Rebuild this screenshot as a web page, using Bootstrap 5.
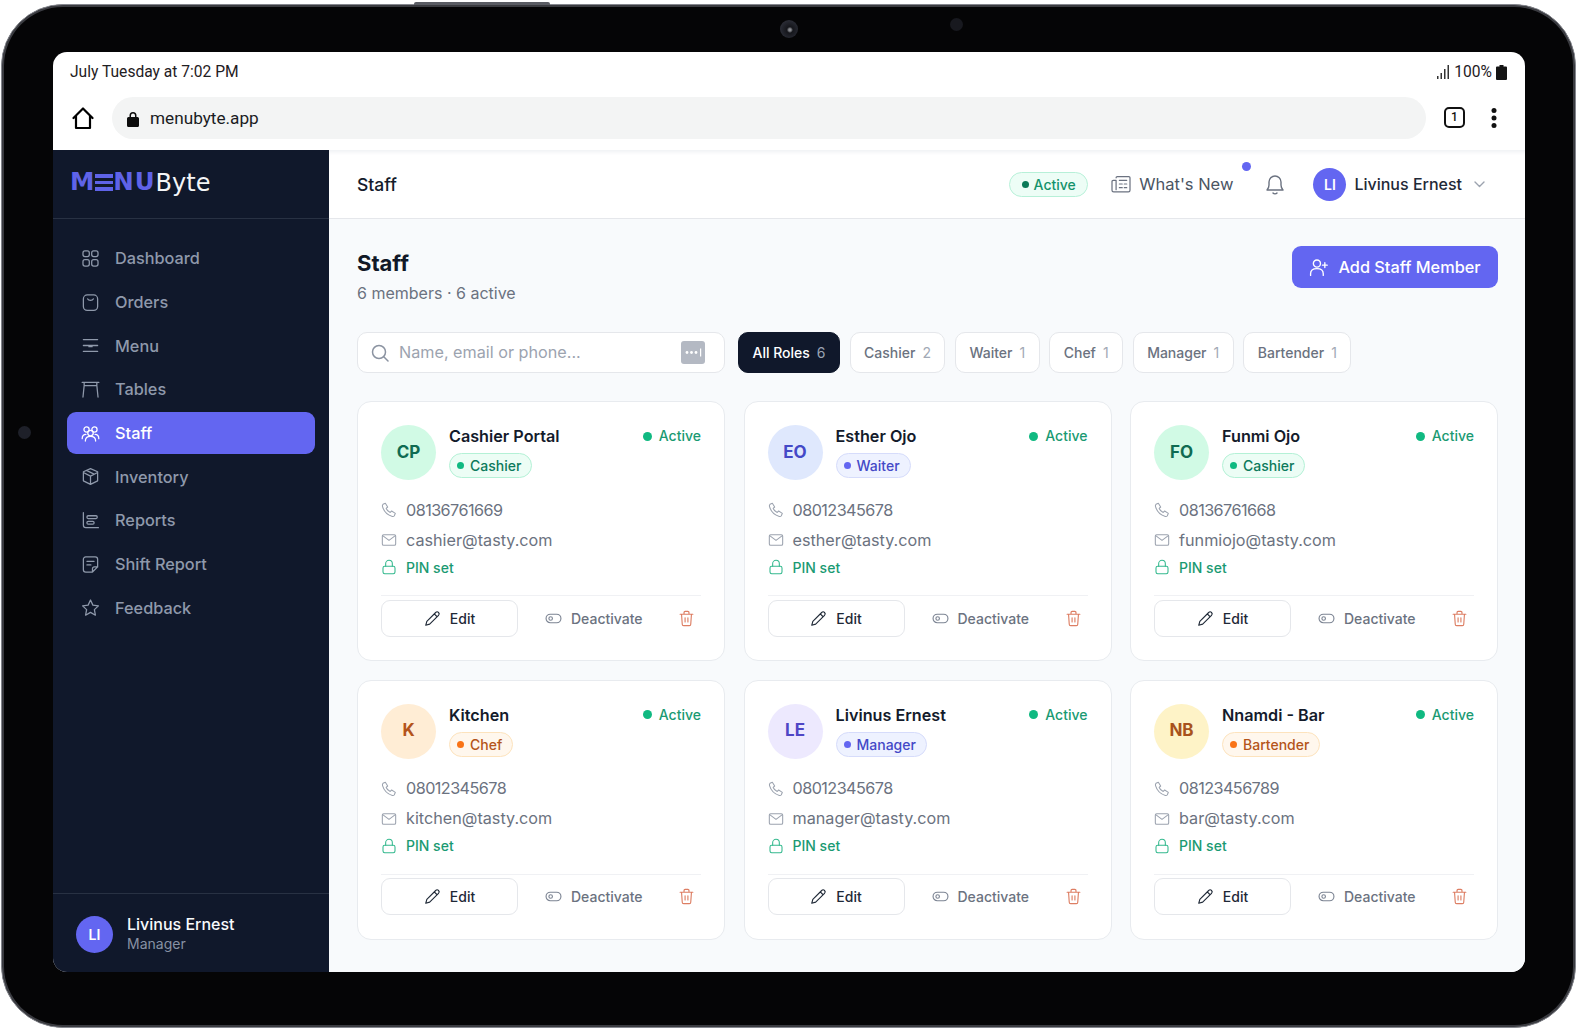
<!DOCTYPE html>
<html lang="en">
<head>
  <meta charset="UTF-8">
  <meta name="viewport" content="width=device-width, initial-scale=1.0">
  <title>MenuByte - Staff</title>
  <link href="https://cdn.jsdelivr.net/npm/bootstrap@5.3.0/dist/css/bootstrap.min.css" rel="stylesheet">
  <style>
    body {
      background-color: #fff;
      font-family: Inter, "Liberation Sans", sans-serif;
      color: #111827;
      overflow: hidden;
    }
    .tablet {
      position: relative;
      width: 1575px;
      height: 1024px;
      margin: 4px 0 0 1px;
      padding: 47px 50px 54px 51px;
      background: #050506;
      border: 1px solid #85878e;
      border-radius: 62px;
      box-shadow: inset 0 0 0 2px #3a3b40;
    }
    .tablet-edge {
      position: absolute;
      top: -3px;
      left: 412px;
      width: 136px;
      height: 3px;
      background: #5a5c63;
      border-radius: 2px 2px 0 0;
    }
    .lens-main {
      position: absolute;
      top: 15px;
      left: 778px;
      width: 18px;
      height: 18px;
      border-radius: 50%;
      background: radial-gradient(circle at 55% 55%, #8b8d92 0 8%, #15161b 22%, #2a2c35 70%);
    }
    .lens-dot {
      position: absolute;
      top: 13px;
      left: 948px;
      width: 13px;
      height: 13px;
      border-radius: 50%;
      background: #18191f;
    }
    .lens-side {
      position: absolute;
      top: 421px;
      left: 16px;
      width: 13px;
      height: 13px;
      border-radius: 50%;
      background: #1e2029;
    }
    .screen {
      width: 1472px;
      height: 920px;
      background: #fff;
      border-radius: 14px;
      overflow: hidden;
    }
    .status-row {
      height: 40px;
      padding: 1px 18px 0 17px;
      font-family: Roboto, sans-serif;
      font-size: 15.6px;
      color: #1f2023;
    }
    .browser-row {
      height: 58px;
      padding: 0 23px 6px 19px;
    }
    .url-box {
      width: 1314px;
      height: 42px;
      margin-left: 18px;
      padding: 1px 0 0 15px;
      background: #f3f4f4;
      border-radius: 21px;
      font-family: Roboto, sans-serif;
      font-size: 17.2px;
      color: #1b1c1f;
    }
    .url-text { margin-left: 3px; }
    .tab-count {
      width: 21px;
      height: 21px;
      margin-left: 18px;
      margin-top: -2px;
      border: 2px solid #111;
      border-radius: 5px;
      font-family: Roboto, sans-serif;
      font-size: 12px;
      font-weight: 500;
      line-height: 17px;
      text-align: center;
      color: #111;
    }
    .menu-dots { margin-left: 26px; }
    .app-side {
      width: 276px;
      flex: 0 0 276px;
      background: #10182b;
    }
    .brand-box {
      height: 69px;
      padding: 0 0 3px 17px;
      border-bottom: 1px solid #283143;
      font-family: "DejaVu Sans", sans-serif;
      font-size: 24px;
      line-height: 1;
    }
    .brand-menu {
      color: #5f63e8;
      font-weight: 700;
      font-size: 24.5px;
      letter-spacing: 1px;
    }
    .brand-e {
      display: inline-block;
      color: transparent;
      background: linear-gradient(to bottom, #5f63e8 0 3.8px, transparent 3.8px 6.6px, #5f63e8 6.6px 10.4px, transparent 10.4px 13.2px, #5f63e8 13.2px 17px);
      background-size: 100% 17px;
      background-position: 0 4px;
      background-repeat: no-repeat;
    }
    .brand-byte { color: #f4f5f7; font-weight: 400; }
    .side-nav {
      padding: 18.5px 14px 0;
      gap: 2px;
    }
    .side-link {
      height: 41.7px;
      padding: 0 14px;
      gap: 15px;
      font-size: 16.3px;
      font-weight: 500;
      color: #8f99ab;
      border-radius: 9px;
    }
    .side-link svg { width: 19px; height: 19px; flex: 0 0 19px; }
    .side-link.is-on,
    .side-link.is-on:hover { background: #6366f1; color: #fff; }
    .side-foot {
      height: 79px;
      padding: 2px 0 0 23px;
      border-top: 1px solid #283143;
    }
    .user-dot {
      border-radius: 50%;
      background: #6366f1;
      color: #fff;
      font-weight: 600;
      display: flex;
      align-items: center;
      justify-content: center;
      flex: none;
    }
    .foot-text { margin-left: 6px; }
    .foot-name { font-size: 16px; font-weight: 500; color: #f8fafc; line-height: 20px; }
    .foot-role { font-size: 14px; color: #8791a3; line-height: 20px; }
    .app-main { background: #f8fafc; min-width: 0; }
    .top-head {
      height: 69px;
      padding: 0 40px 0 28px;
      background: #fff;
      border-bottom: 1px solid #e5e7eb;
      box-shadow: inset 0 5px 4px -3px #eef0f3;
    }
    .head-title { font-size: 17.5px; font-weight: 500; color: #141b2b; margin-top: 3px; }
    .live-pill {
      height: 25px;
      width: 79px;
      border: 1px solid #b7f0d8;
      background: #edfdf6;
      border-radius: 13px;
      font-size: 14px;
      font-weight: 500;
      color: #14926b;
      gap: 5px;
    }
    .live-pill i { width: 7px; height: 7px; border-radius: 50%; background: #0b7a58; }
    .news-btn {
      position: relative;
      margin-left: 23px;
      gap: 8px;
      font-size: 16.5px;
      color: #4b5563;
    }
    .news-dot {
      position: absolute;
      top: -10px;
      right: -18px;
      width: 9px;
      height: 9px;
      border-radius: 50%;
      background: #6366f1;
    }
    .bell-btn { margin-left: 33px; }
    .head-user { margin-left: 29px; font-size: 16px; color: #1f2937; font-weight: 500; }
    .head-caret { margin-left: 12px; }
    .page-body { padding: 28px 27px 0 28px; }
    .page-head { height: 58px; margin-bottom: 27px; }
    .page-title { font-size: 22px; font-weight: 700; line-height: 31px; color: #111827; margin: 1px 0 0; }
    .page-sub { font-size: 16px; line-height: 22px; margin-top: 3px; color: #6b7280; }
    .add-btn {
      height: 42px;
      width: 206px;
      margin-top: -1px;
      gap: 10px;
      padding: 0;
      background: #6366f1;
      border: 0;
      border-radius: 9px;
      color: #fff;
      font-size: 16.3px;
      font-weight: 500;
    }
    .add-btn:hover { background: #6366f1; color: #fff; }
    .tool-row { margin-bottom: 28px; height: 41px; }
    .search-box {
      width: 368px;
      height: 41px;
      padding: 0 19px 0 13px;
      gap: 10px;
      background: #fff;
      border: 1px solid #e5e7eb;
      border-radius: 10px;
    }
    .search-box .form-control {
      padding: 0;
      border: 0;
      box-shadow: none;
      background: transparent;
      font-size: 16.2px;
      color: #374151;
    }
    .search-box .form-control::placeholder { color: #9ca3af; opacity: 1; }
    .chip-row { gap: 9.5px; margin-left: 13px; }
    .role-chip {
      height: 41px;
      padding: 0 13.5px;
      gap: 7px;
      background: #fff;
      border: 1px solid #e5e7eb;
      border-radius: 10px;
      font-size: 14px;
      font-weight: 500;
      color: #6b7280;
    }
    .role-chip span { color: #a2a9b5; font-weight: 400; }
    .role-chip.is-on { background: #10182b; border-color: #10182b; color: #fff; }
    .role-chip.is-on span { color: #9aa3b2; }
    .staff-grid {
      display: grid;
      grid-template-columns: repeat(3, 1fr);
      gap: 18.5px;
    }
    .staff-card {
      height: 260px;
      padding: 22px 23px 23px;
      border: 1px solid #e8ebef;
      border-radius: 14px;
      background: #fff;
    }
    .staff-top { height: 55px; margin-bottom: 16px; }
    .staff-ava {
      width: 55px;
      height: 55px;
      margin-top: 1px;
      flex: none;
      border-radius: 50%;
      font-size: 17px;
      font-weight: 700;
      display: flex;
      align-items: center;
      justify-content: center;
    }
    .staff-body { margin-left: 13px; padding-top: 1px; }
    .staff-name { font-size: 16.2px; font-weight: 600; line-height: 22px; color: #141b2b; }
    .staff-state { font-size: 14px; font-weight: 500; color: #1a9a72; gap: 7px; line-height: 22px; }
    .staff-state i { width: 9px; height: 9px; border-radius: 50%; background: #10b981; }
    .role-tag {
      height: 25px;
      margin-top: 6px;
      padding: 0 10px 0 7px;
      gap: 6px;
      border: 1px solid;
      border-radius: 13px;
      font-size: 14px;
      font-weight: 500;
    }
    .role-tag i { width: 7px; height: 7px; border-radius: 50%; }
    .tone-green { background: #ecfdf5; border-color: #b4f1d6; color: #0d7a5c; }
    .tone-green i { background: #10b981; }
    .tone-blue { background: #eef2ff; border-color: #d6dcfb; color: #4449c7; }
    .tone-blue i { background: #6366f1; }
    .tone-orange { background: #fff7ed; border-color: #fde3bd; color: #b4541a; }
    .tone-orange i { background: #f97316; }
    .info-row { height: 30px; gap: 9px; font-size: 16.2px; color: #6b7280; }
    .info-row svg { width: 16px; height: 16px; flex: none; color: #9ca3af; }
    .phone-num { letter-spacing: -.55px; }
    .pin-row { height: 24px; font-size: 14px; font-weight: 500; color: #1a9a72; }
    .pin-row svg { color: #34b98e; }
    .staff-actions { margin-top: 16px; padding-top: 4px; border-top: 1px solid #f0f1f4; height: 41px; }
    .edit-btn {
      width: 137px;
      height: 37px;
      padding: 0;
      gap: 9px;
      background: #fff;
      border: 1px solid #e5e7eb;
      border-radius: 9px;
      font-size: 14px;
      font-weight: 500;
      color: #1f2937;
    }
    .off-btn {
      margin-left: 27px;
      padding: 0;
      gap: 9px;
      border: 0;
      font-size: 14px;
      font-weight: 500;
      color: #6b7280;
    }
    .trash-btn { margin-left: auto; margin-right: 6px; padding: 0; border: 0; color: #dd7e63; }
  </style>
</head>
<body>
  <svg width="0" height="0" class="d-none">
    <defs>
      <g id="i-grid"><rect x="2.500" y="2.500" width="8" height="7" rx="2.500"/><rect x="13.500" y="2.500" width="8" height="7" rx="2.500"/><rect x="2.500" y="13.500" width="8" height="8" rx="2.500"/><rect x="13.500" y="13.500" width="8" height="8" rx="2.500"/></g>
      <g id="i-bag"><rect x="3" y="2.500" width="18" height="19.500" rx="5"/><path d="M8.500 7.500c1 2.400 6 2.400 7 0"/></g>
      <g id="i-menu"><path d="M3 4.500h18M3 12h18M3 19.500h18M10 13.500h4"/></g>
      <g id="i-table"><path d="M1.500 3h21M4 3v4M20 3v4M4 7h16M4 7 2.500 21.500M20 7l1.500 14.500"/></g>
      <g id="i-users"><circle cx="7" cy="7" r="3.300"/><circle cx="17" cy="7" r="3.300"/><circle cx="12" cy="11.500" r="3.500"/><path d="M1.500 18.500c0-3.500 2-5.500 4.800-5.500M22.500 18.500c0-3.500-2-5.500-4.800-5.500M5.500 21.500c0-3.800 2.800-6 6.500-6s6.500 2.200 6.500 6"/></g>
      <g id="i-box"><path d="M12 2 3 6v11.500l9 4.500 9-4.500V6zM3 7l9 4.500L21 7M12 11.500V22M7.500 4.500l9 4.500"/></g>
      <g id="i-chart"><path d="M3 2v16a3 3 0 0 0 3 3h16"/><rect x="7.500" y="6" width="13" height="3.500" rx="1.500"/><rect x="7.500" y="13" width="9" height="3.500" rx="1.500"/></g>
      <g id="i-note"><path d="M6 2.500h12a3 3 0 0 1 3 3V15l-6.500 6.500H6a3 3 0 0 1-3-3v-13a3 3 0 0 1 3-3zM21 15h-4a2.500 2.500 0 0 0-2.500 2.500v4M7.500 8h9M7.500 12.500h5"/></g>
      <g id="i-star"><path d="m12 2.500 3 6.500 7 .9-5.100 4.800 1.300 7-6.200-3.500-6.200 3.500 1.300-7L2 9.900 9 9z"/></g>
      <g id="i-phone"><path d="M3 3.500 6.500 2l3.500 5.500-2.200 2.200c1 2.500 3.500 5 6 6l2.200-2.200L21.500 17 20 20.500c-.6 1-2 1.500-3 1.200C9.500 19.500 4.500 14.500 2.300 7c-.3-1 .1-2.800.7-3.500z"/></g>
      <g id="i-mail"><rect x="2" y="4" width="20" height="16" rx="2"/><path d="m2.500 5.500 9.500 7 9.500-7"/></g>
      <g id="i-lock"><rect x="3" y="11" width="18" height="11" rx="2.500"/><path d="M7 11V7a5 5 0 0 1 10 0v4"/></g>
      <g id="i-pen"><path d="M16.500 3.500a2.800 2.800 0 0 1 4 4L8 20l-5.500 1.500L4 16zM14.500 5.500l4 4"/></g>
      <g id="i-toggle"><rect x="1.500" y="6" width="21" height="12" rx="6"/><circle cx="8" cy="12" r="2.500"/></g>
      <g id="i-trash"><path d="M3 6h18M8.500 6V3.500A1.500 1.500 0 0 1 10 2h4a1.500 1.500 0 0 1 1.500 1.500V6M5 6l1 14a2 2 0 0 0 2 2h8a2 2 0 0 0 2-2l1-14M10 11v6M14 11v6"/></g>
    </defs>
  </svg>

  <div class="tablet">
    <div class="tablet-edge"></div>
    <div class="lens-main"></div>
    <div class="lens-dot"></div>
    <div class="lens-side"></div>

    <div class="screen d-flex flex-column">
      <div class="status-row d-flex align-items-center justify-content-between">
        <span>July Tuesday at 7:02 PM</span>
        <span class="d-flex align-items-center gap-1">
          <svg width="13" height="14" viewBox="0 0 13 14" fill="#333"><rect x="0" y="11" width="1.500" height="3"/><rect x="3.500" y="8" width="1.500" height="6"/><rect x="7" y="4" width="1.500" height="10"/><rect x="10.500" y="0" width="1.500" height="14"/></svg>
          <span>100%</span>
          <svg width="11" height="15" viewBox="0 0 11 15" fill="#141414"><path d="M3.500 0h4v1.500H10a1 1 0 0 1 1 1V14a1 1 0 0 1-1 1H1a1 1 0 0 1-1-1V2.500a1 1 0 0 1 1-1h2.500z"/></svg>
        </span>
      </div>
      <div class="browser-row d-flex align-items-center">
        <svg width="22" height="23" viewBox="0 0 22 23" fill="none" stroke="#000" stroke-width="2.200" stroke-linejoin="round" stroke-linecap="round"><path d="M1.500 11 11 1.500 20.500 11M4 8.500V21h14V8.500"/></svg>
        <div class="url-box d-flex align-items-center gap-2">
          <svg width="12" height="16" viewBox="0 0 12 16" fill="#0c0c0c"><path d="M2.500 6V4.500a3.500 3.500 0 0 1 7 0V6h1a1.500 1.500 0 0 1 1.500 1.500v7A1.500 1.500 0 0 1 10.500 16h-9A1.500 1.500 0 0 1 0 14.500v-7A1.500 1.500 0 0 1 1.500 6zm1.500 0h4V4.500a2 2 0 0 0-4 0z"/></svg>
          <span class="url-text">menubyte.app</span>
        </div>
        <div class="tab-count">1</div>
        <svg class="menu-dots" width="6" height="22" viewBox="0 0 6 22" fill="#111"><circle cx="3" cy="3.500" r="2.500"/><circle cx="3" cy="11" r="2.500"/><circle cx="3" cy="18.500" r="2.500"/></svg>
      </div>

      <div class="d-flex flex-grow-1" style="min-height:0">
        <aside class="app-side d-flex flex-column">
          <div class="brand-box d-flex align-items-center">
            <span class="brand-menu">M<span class="brand-e">E</span>NU</span><span class="brand-byte">Byte</span>
          </div>
          <nav class="nav flex-column side-nav flex-grow-1" id="sideNav"></nav>
          <div class="side-foot d-flex align-items-center gap-2">
            <div class="user-dot" style="width:37px;height:37px;font-size:14px">LI</div>
            <div class="foot-text">
              <div class="foot-name">Livinus Ernest</div>
              <div class="foot-role">Manager</div>
            </div>
          </div>
        </aside>

        <main class="app-main flex-grow-1 d-flex flex-column">
          <header class="top-head d-flex align-items-center">
            <div class="head-title me-auto">Staff</div>
            <div class="live-pill d-flex align-items-center justify-content-center"><i></i>Active</div>
            <div class="news-btn d-flex align-items-center">
              <svg width="20" height="18" viewBox="0 0 24 22" fill="none" stroke="#6b7280" stroke-width="1.500" stroke-linecap="round" stroke-linejoin="round"><path d="M6 3.500A1.500 1.500 0 0 1 7.500 2h14A1.500 1.500 0 0 1 23 3.500v15a2 2 0 0 1-2 2H3a2 2 0 0 1-2-2V8a1.500 1.500 0 0 1 1.500-1.500H6v11.500M10 6.500h9M10 11h3.500M16 11h3M10 15.500h3.500M16 15.500h3"/></svg>
              <span>What's New</span>
              <span class="news-dot"></span>
            </div>
            <svg class="bell-btn" width="18" height="21" viewBox="0 0 18 21" fill="none" stroke="#6b7280" stroke-width="1.400" stroke-linecap="round" stroke-linejoin="round"><path d="M1 16c1.500-1.500 2-2.500 2-5V8a6 6 0 0 1 12 0v3c0 2.500.5 3.500 2 5zM7 19c1 1.200 3 1.200 4 0"/></svg>
            <div class="head-user d-flex align-items-center">
              <div class="user-dot me-2" style="width:33px;height:33px;font-size:14px">LI</div>
              <span>Livinus Ernest</span>
              <svg class="head-caret" width="11" height="7" viewBox="0 0 11 7" fill="none" stroke="#9ca3af" stroke-width="1.400" stroke-linecap="round" stroke-linejoin="round"><path d="m1 1 4.500 4.500L10 1"/></svg>
            </div>
          </header>

          <div class="page-body">
            <div class="page-head d-flex justify-content-between align-items-start">
              <div>
                <h1 class="page-title">Staff</h1>
                <div class="page-sub">6 members · 6 active</div>
              </div>
              <button class="btn add-btn d-flex align-items-center justify-content-center">
                <svg width="19" height="19" viewBox="0 0 24 24" fill="none" stroke="#fff" stroke-width="1.700" stroke-linecap="round" stroke-linejoin="round"><circle cx="10" cy="7" r="4.500"/><path d="M2 22v-2c0-4 3-6.500 8-6.500s8 2.500 8 6.500v2M20 6v6M17 9h6"/></svg>
                <span>Add Staff Member</span>
              </button>
            </div>

            <div class="tool-row d-flex align-items-center">
              <div class="search-box d-flex align-items-center">
                <svg class="flex-shrink-0" width="18" height="18" viewBox="0 0 18 18" fill="none" stroke="#8b93a1" stroke-width="1.500" stroke-linecap="round"><circle cx="8" cy="8" r="6.500"/><path d="m13 13 4 4"/></svg>
                <input class="form-control" type="text" placeholder="Name, email or phone...">
                <svg class="flex-shrink-0" width="24" height="23" viewBox="0 0 24 23"><rect width="24" height="23" rx="3" fill="#b4b9c3"/><circle cx="6" cy="11.500" r="1.400" fill="#fff"/><circle cx="10.500" cy="11.500" r="1.400" fill="#fff"/><circle cx="15" cy="11.500" r="1.400" fill="#fff"/><rect x="19" y="7.500" width="1.200" height="8" fill="#fff"/></svg>
              </div>
              <div class="chip-row d-flex" id="chipRow"></div>
            </div>

            <div class="staff-grid" id="staffGrid"></div>
          </div>
        </main>
      </div>
    </div>
  </div>

  <script>
    const icon = (name, attrs = '') =>
      `<svg viewBox="0 0 24 24" fill="none" stroke="currentColor" stroke-width="1.600" stroke-linecap="round" stroke-linejoin="round" ${attrs}><use href="#${name}"/></svg>`;

    const navItems = [
      ['Dashboard', 'i-grid'], ['Orders', 'i-bag'], ['Menu', 'i-menu'], ['Tables', 'i-table'],
      ['Staff', 'i-users'], ['Inventory', 'i-box'], ['Reports', 'i-chart'],
      ['Shift Report', 'i-note'], ['Feedback', 'i-star']
    ];
    document.getElementById('sideNav').innerHTML = navItems.map(([label, ic]) =>
      `<a class="nav-link side-link d-flex align-items-center ${label === 'Staff' ? 'is-on' : ''}" href="#">${icon(ic)}<span>${label}</span></a>`
    ).join('');

    const chips = [['All Roles', 6], ['Cashier', 2], ['Waiter', 1], ['Chef', 1], ['Manager', 1], ['Bartender', 1]];
    document.getElementById('chipRow').innerHTML = chips.map(([label, n], i) =>
      `<div class="role-chip d-flex align-items-center ${i === 0 ? 'is-on' : ''}">${label}<span>${n}</span></div>`
    ).join('');

    const staff = [
      { ini: 'CP', name: 'Cashier Portal', role: 'Cashier', tone: 'green', bg: '#d1fae5', fg: '#0f6b52', phone: '08136761669', mail: 'cashier@tasty.com' },
      { ini: 'EO', name: 'Esther Ojo', role: 'Waiter', tone: 'blue', bg: '#dfe8fd', fg: '#4449c7', phone: '08012345678', mail: 'esther@tasty.com' },
      { ini: 'FO', name: 'Funmi Ojo', role: 'Cashier', tone: 'green', bg: '#d1fae5', fg: '#0f6b52', phone: '08136761668', mail: 'funmiojo@tasty.com' },
      { ini: 'K', name: 'Kitchen', role: 'Chef', tone: 'orange', bg: '#ffedd5', fg: '#b4541a', phone: '08012345678', mail: 'kitchen@tasty.com' },
      { ini: 'LE', name: 'Livinus Ernest', role: 'Manager', tone: 'blue', bg: '#ede9fe', fg: '#4f46c5', phone: '08012345678', mail: 'manager@tasty.com' },
      { ini: 'NB', name: 'Nnamdi - Bar', role: 'Bartender', tone: 'orange', bg: '#fef3c7', fg: '#a8521c', phone: '08123456789', mail: 'bar@tasty.com' }
    ];
    document.getElementById('staffGrid').innerHTML = staff.map(s => `
      <div class="staff-card">
        <div class="staff-top d-flex">
          <div class="staff-ava" style="background:${s.bg};color:${s.fg}">${s.ini}</div>
          <div class="staff-body flex-grow-1">
            <div class="d-flex justify-content-between">
              <div class="staff-name">${s.name}</div>
              <div class="staff-state d-flex align-items-center"><i></i>Active</div>
            </div>
            <div class="d-flex"><div class="role-tag tone-${s.tone} d-flex align-items-center"><i></i>${s.role}</div></div>
          </div>
        </div>
        <div class="info-row d-flex align-items-center">${icon('i-phone')}<span class="phone-num">${s.phone}</span></div>
        <div class="info-row d-flex align-items-center">${icon('i-mail')}<span>${s.mail}</span></div>
        <div class="info-row pin-row d-flex align-items-center">${icon('i-lock')}<span>PIN set</span></div>
        <div class="staff-actions d-flex align-items-center">
          <button class="btn edit-btn d-flex align-items-center justify-content-center">${icon('i-pen', 'width="17" height="17"')}Edit</button>
          <button class="btn off-btn d-flex align-items-center">${icon('i-toggle', 'width="17" height="17" style="color:#7c8493"')}Deactivate</button>
          <button class="btn trash-btn d-flex">${icon('i-trash', 'width="17" height="17"')}</button>
        </div>
      </div>
    `).join('');
  </script>
  <script src="https://cdn.jsdelivr.net/npm/bootstrap@5.3.0/dist/js/bootstrap.bundle.min.js"></script>
</body>
</html>
